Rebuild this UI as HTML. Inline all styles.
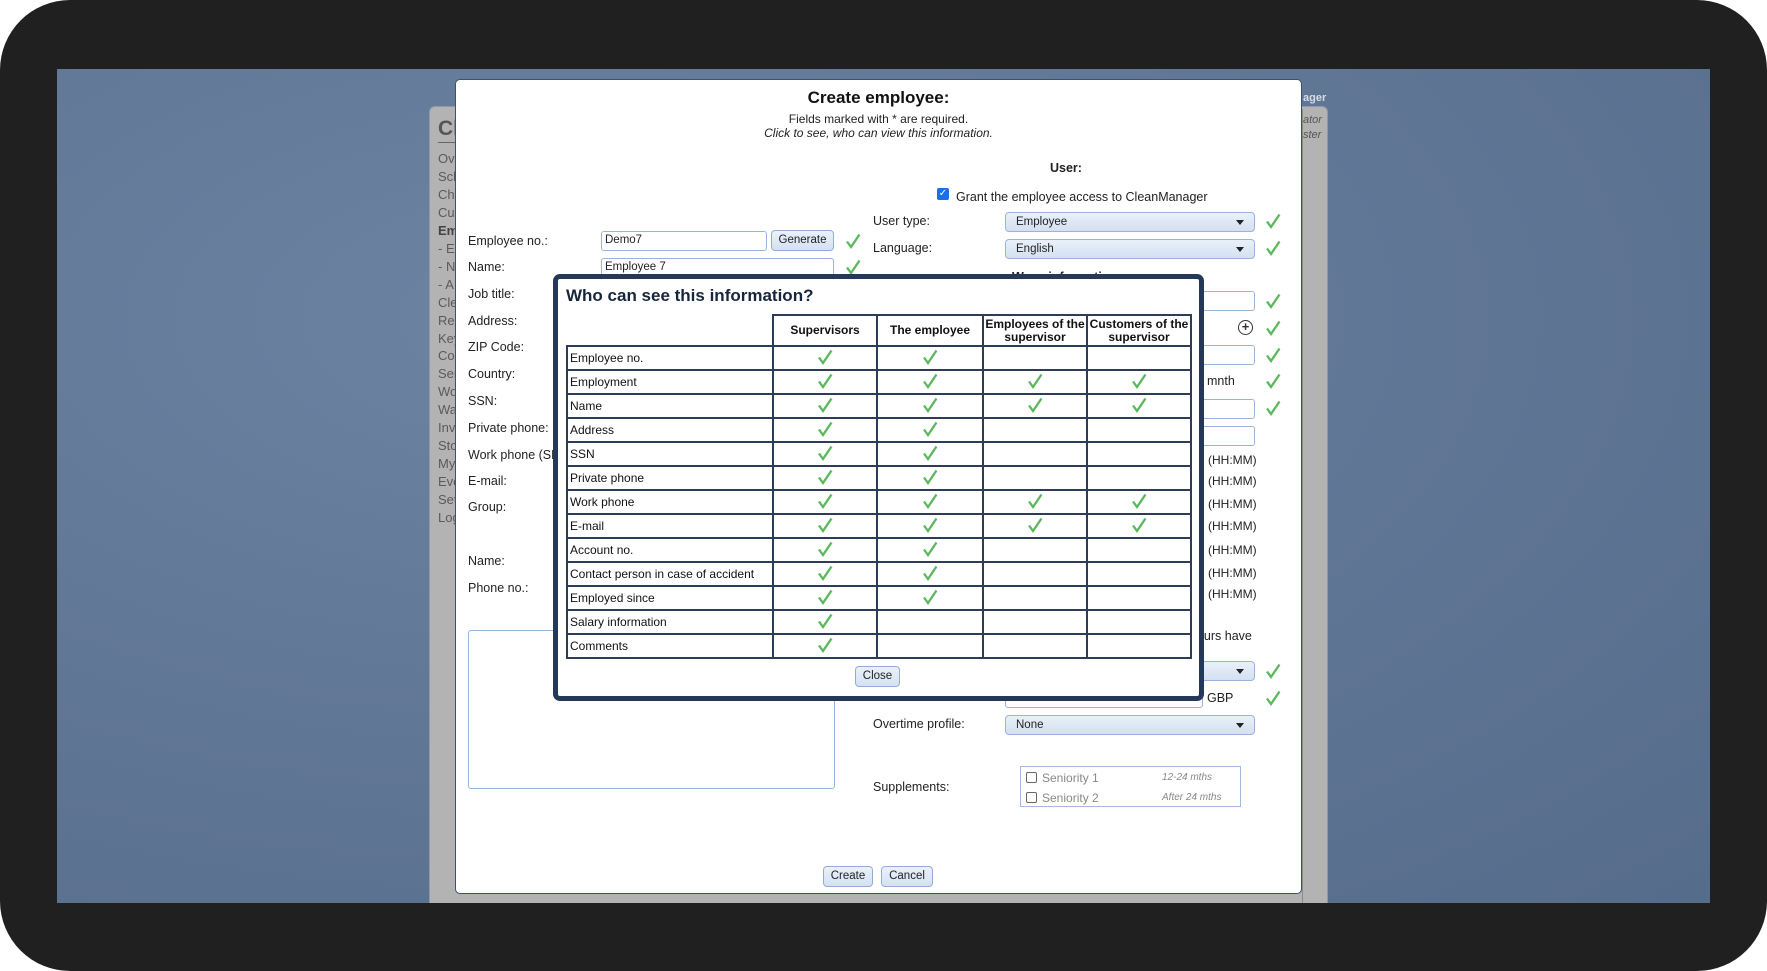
<!DOCTYPE html>
<html><head><meta charset="utf-8">
<style>
*{box-sizing:border-box;margin:0;padding:0}
html,body{width:1767px;height:971px;overflow:hidden;background:#fff;font-family:"Liberation Sans",Arial,sans-serif;}
.frame{position:absolute;left:0;top:0;width:1767px;height:971px;background:#202021;border-radius:70px;}
.screen{position:absolute;left:57px;top:69px;width:1653px;height:834px;overflow:hidden;
background:radial-gradient(ellipse at 30% 30%,#6c83a2 0%,#627897 45%,#566c8b 100%);}
.abs{position:absolute}
.back{position:absolute;left:372px;top:37px;width:899px;height:820px;background:#b3b3b3;border-radius:6px 6px 0 0;border:1px solid #8f9aa8}
.side{position:absolute;left:438px;font-size:13px;color:#5a5a5a;white-space:nowrap}
.modal{position:absolute;left:455px;top:79px;width:847px;height:815px;background:#fff;border:1px solid #3d5270;border-radius:5px;overflow:hidden}
.t{position:absolute;font-size:12.5px;color:#222;white-space:nowrap}
.inp{position:absolute;border:1px solid #9bb4da;border-radius:3px;background:#fff;height:20px;font-size:11.5px;padding:2px 3px;color:#222}
.sel{position:absolute;border:1px solid #9bb4da;border-radius:4px;background:linear-gradient(#e9f0fa,#d4e0f1);height:20px;font-size:11.5px;padding:3px 10px;color:#222}
.sel:after{content:"";position:absolute;right:10px;top:7px;border-left:4px solid transparent;border-right:4px solid transparent;border-top:5px solid #222}
.btn{position:absolute;border:1px solid #93aed6;border-radius:4px;background:linear-gradient(#eaf1fb,#d4e1f3);font-size:11.5px;text-align:center;color:#222;line-height:19px;height:21px}
.ck{position:absolute;width:18px;height:18px}
.popup{position:absolute;left:553px;top:274px;width:651px;height:427px;background:#fff;border:5px solid #24395a;border-radius:7px}
table{position:absolute;left:566px;top:314px;border-collapse:collapse;font-size:12px;color:#111}
td,th{border:2px solid #2e3c58;height:24px;padding:0 2px}
th{font-weight:bold;height:31px;line-height:13px;text-align:center;font-size:12px;padding:0;white-space:nowrap}
td.c{text-align:center;padding:0}
</style></head><body>
<div class="frame"></div>
<div class="screen">
<div class="back"></div>
</div>
<div class="abs" style="left:438px;top:117px;font-size:21px;font-weight:bold;color:#555">Cl</div>
<div class="abs" style="left:438px;top:142px;width:17px;height:1px;background:#666"></div>
<div id="side"></div>
<div class="abs" style="left:1303px;top:92px;font-size:11px;color:#d9dde3;font-weight:bold">ager</div>
<div class="abs" style="left:1303px;top:114px;font-size:11px;color:#555;font-style:italic">ator</div>
<div class="abs" style="left:1303px;top:129px;font-size:11px;color:#555;font-style:italic">ster</div>
<div class="abs" style="left:1302px;top:109px;width:26px;height:794px;border-left:1px solid #8a8a8a"></div>

<div class="modal"></div>
<div class="t" style="left:455px;width:847px;text-align:center;top:88px;font-size:17px;font-weight:bold;color:#111">Create employee:</div>
<div class="t" style="left:455px;width:847px;text-align:center;top:112px;font-size:12px">Fields marked with * are required.</div>
<div class="t" style="left:455px;width:847px;text-align:center;top:126px;font-size:12px;font-style:italic">Click to see, who can view this information.</div>
<div class="t" style="left:1050px;top:161px;font-weight:bold">User:</div>
<div class="abs" style="left:937px;top:188px;width:12px;height:12px;background:#1a6ee8;border-radius:2px;color:#fff;font-size:10px;line-height:12px;text-align:center">✓</div>
<div class="t" style="left:956px;top:190px">Grant the employee access to CleanManager</div>
<div class="t" style="left:873px;top:214px">User type:</div>
<div class="sel" style="left:1005px;top:212px;width:250px">Employee</div>
<div class="t" style="left:873px;top:241px">Language:</div>
<div class="sel" style="left:1005px;top:239px;width:250px">English</div>
<div class="t" style="left:1012px;top:270px;font-weight:bold">Wage information</div>

<div class="t" style="left:468px;top:234px">Employee no.:</div>
<div class="t" style="left:468px;top:260px">Name:</div>
<div class="t" style="left:468px;top:287px">Job title:</div>
<div class="t" style="left:468px;top:314px">Address:</div>
<div class="t" style="left:468px;top:340px">ZIP Code:</div>
<div class="t" style="left:468px;top:367px">Country:</div>
<div class="t" style="left:468px;top:394px">SSN:</div>
<div class="t" style="left:468px;top:421px">Private phone:</div>
<div class="t" style="left:468px;top:448px">Work phone (SMS):</div>
<div class="t" style="left:468px;top:474px">E-mail:</div>
<div class="t" style="left:468px;top:500px">Group:</div>
<div class="t" style="left:468px;top:554px">Name:</div>
<div class="t" style="left:468px;top:581px">Phone no.:</div>
<div class="inp" style="left:601px;top:231px;width:166px">Demo7</div>
<div class="btn" style="left:771px;top:230px;width:63px">Generate</div>
<div class="inp" style="left:601px;top:258px;width:233px">Employee 7</div>
<div class="inp" style="left:468px;top:630px;width:367px;height:159px"></div>

<div class="inp" style="left:1100px;top:291px;width:155px"></div>
<div class="abs" style="left:1238px;top:320px;width:15px;height:15px;border:1.5px solid #333;border-radius:50%;font-size:13px;line-height:11px;text-align:center;font-weight:bold;color:#333">+</div>
<div class="inp" style="left:1100px;top:345px;width:155px"></div>
<div class="t" style="left:1207px;top:374px">mnth</div>
<div class="inp" style="left:1100px;top:399px;width:155px"></div>
<div class="inp" style="left:1100px;top:426px;width:155px"></div>
<div id="hh"></div>
<div class="t" style="left:1190px;top:629px">hours have</div>
<div class="sel" style="left:1100px;top:661px;width:155px"></div>
<div class="inp" style="left:1005px;top:688px;width:198px"></div>
<div class="t" style="left:1207px;top:691px">GBP</div>
<div class="t" style="left:873px;top:717px">Overtime profile:</div>
<div class="sel" style="left:1005px;top:715px;width:250px">None</div>
<div class="t" style="left:873px;top:780px">Supplements:</div>
<div class="abs" style="left:1020px;top:766px;width:221px;height:41px;border:1px solid #a3badf"></div>
<div class="abs" style="left:1026px;top:772px;width:11px;height:11px;border:1px solid #666;border-radius:2px"></div>
<div class="abs" style="left:1026px;top:792px;width:11px;height:11px;border:1px solid #666;border-radius:2px"></div>
<div class="t" style="left:1042px;top:771px;color:#888;font-size:12px">Seniority 1</div>
<div class="t" style="left:1042px;top:791px;color:#888;font-size:12px">Seniority 2</div>
<div class="t" style="left:1162px;top:772px;color:#888;font-size:10px;font-style:italic">12-24 mths</div>
<div class="t" style="left:1162px;top:792px;color:#888;font-size:10px;font-style:italic">After 24 mths</div>
<div class="btn" style="left:823px;top:866px;width:50px">Create</div>
<div class="btn" style="left:881px;top:866px;width:52px">Cancel</div>
<div id="cks"></div>

<div class="popup"></div>
<div class="t" style="left:566px;top:286px;font-size:17px;font-weight:bold;color:#17263d">Who can see this information?</div>
<table id="tb">
<tr><th style="border:none;border-bottom:2px solid #2e3c58;width:206px"></th><th style="width:104px">Supervisors</th><th style="width:106px">The employee</th><th style="width:104px">Employees of the<br>supervisor</th><th style="width:104px">Customers of the<br>supervisor</th></tr>
</table>
<div class="btn" style="left:855px;top:666px;width:45px">Close</div>

<script>
var ck='<svg viewBox="0 0 18 18" width="18" height="18"><path d="M3 9.5 L7 15 L15.5 2.5" fill="none" stroke="#5cb85c" stroke-width="2.3" stroke-linejoin="miter"/></svg>';
var s=["Ov","Sch","Ch","Cu","Em"," - E"," - N"," - A","Cle","Rep","Key","Co","Ser","Wo","Wa","Inv","Sto","My","Eve","Set","Log"],h="";
s.forEach(function(x,i){h+='<div class="side" style="top:'+(151+i*17.95)+'px;'+(i==4?'font-weight:bold;color:#444':'')+'">'+x+'</div>'});
document.getElementById('side').innerHTML=h;
h="";[460,481,504,526,550,573,594].forEach(function(y){h+='<div class="t" style="left:1208px;top:'+(y-7)+'px;font-size:12px">(HH:MM)</div>'});
document.getElementById('hh').innerHTML=h;
h="";[221,248,301,328,355,381,408,671,698].forEach(function(y){h+='<div class="ck" style="left:1264px;top:'+(y-9)+'px">'+ck+'</div>'});
[241,267].forEach(function(y){h+='<div class="ck" style="left:844px;top:'+(y-9)+'px">'+ck+'</div>'});
document.getElementById('cks').innerHTML=h;
var rows=[["Employee no.",2],["Employment",4],["Name",4],["Address",2],["SSN",2],["Private phone",2],["Work phone",4],["E-mail",4],["Account no.",2],["Contact person in case of accident",2],["Employed since",2],["Salary information",1],["Comments",1]];
h="";rows.forEach(function(r){h+='<tr><td>'+r[0]+'</td>';for(var i=0;i<4;i++)h+='<td class="c">'+(i<r[1]?ck:'')+'</td>';h+='</tr>'});
document.getElementById('tb').insertAdjacentHTML('beforeend',h);
</script>
</body></html>
